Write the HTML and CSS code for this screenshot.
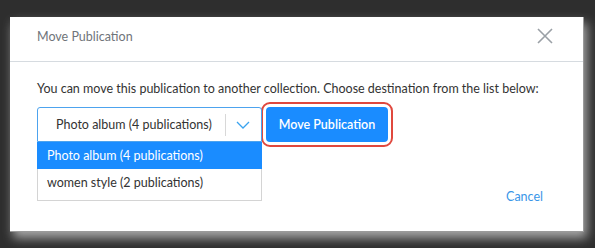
FILE: index.html
```html
<!DOCTYPE html>
<html lang="en">
<head>
    <meta charset="UTF-8">
    <title>Move Publication</title>
    <link rel="stylesheet" href="styles.css">
</head>
<body>
    <div class="modal">
        <div class="modalHeader">
            <span class="title">Move Publication</span>
            <svg class="close" width="16" height="16" viewBox="0 0 16 16">
                <path d="M1 1L15 15M15 1L1 15" stroke="#9aa0a6" stroke-width="1.6" fill="none"/>
            </svg>
        </div>
        <div class="modalBody">
            <p class="info">You can move this publication to another collection. Choose destination from the list below:</p>
            <div class="row">
                <div class="selectWrap">
                    <div class="select">
                        <span class="selected">Photo album (4 publications)</span>
                        <span class="divider"></span>
                        <svg class="chevron" width="14" height="8" viewBox="0 0 14 8">
                            <path d="M1 1L7 7L13 1" stroke="#3aa3ef" stroke-width="1.3" fill="none"/>
                        </svg>
                    </div>
                    <ul class="options">
                        <li class="option active">Photo album (4 publications)</li>
                        <li class="option">women style (2 publications)</li>
                    </ul>
                </div>
                <div class="ring">
                    <button class="btnMove">Move Publication</button>
                </div>
            </div>
            <div class="footer">
                <a class="cancel" href="#">Cancel</a>
            </div>
        </div>
    </div>
</body>
</html>
```

FILE: styles.css
```css
body{
    margin: 0;
    width: 595px;
    height: 248px;
    overflow: hidden;
    background: #2e2e2e;
    font-family: Lato, "Liberation Sans", sans-serif;
}
.modal{
    margin: 17px 0 0 10px;
    width: 573px;
    height: 214px;
    background: #fff;
    border-right: 1px solid #9a9a9a;
    border-bottom: 1px solid #9a9a9a;
    box-shadow: 3px 6px 10px #a8a8a8;
    display: flex;
    flex-direction: column;
}
.modalHeader{
    height: 45px;
    border-bottom: 1px solid #d6dbe0;
    display: flex;
    align-items: center;
    justify-content: space-between;
    padding: 0 30px 6px 27px;
    box-sizing: border-box;
}
.title{
    font-size: 12.5px;
    color: #6f747a;
}
.modalBody{
    padding: 0 27px;
    flex: 1;
    display: flex;
    flex-direction: column;
}
.info{
    margin: 19px 0 0 0;
    font-size: 12.5px;
    color: #333;
    line-height: 16px;
    white-space: nowrap;
}
.row{
    display: flex;
    margin-top: 5px;
    align-items: center;
}
.selectWrap{
    position: relative;
    width: 225px;
}
.select{
    height: 35px;
    border: 1px solid #4da3ee;
    border-radius: 3px 3px 0 0;
    box-sizing: border-box;
    display: flex;
    align-items: center;
    padding-left: 18px;
}
.selected{
    font-size: 12.5px;
    color: #333;
    flex: 1;
    white-space: nowrap;
}
.divider{
    width: 1px;
    height: 22px;
    background: #d8d8d8;
    margin-right: 10px;
}
.chevron{
    margin-right: 11px;
}
.options{
    position: absolute;
    left: 0;
    top: 35px;
    width: 225px;
    margin: 0;
    padding: 0 0 4px 0;
    list-style: none;
    background: #fff;
    border: 1px solid #d4d4d4;
    border-top: none;
    box-sizing: border-box;
}
.option{
    height: 27px;
    line-height: 27px;
    padding-left: 9px;
    font-size: 12.5px;
    color: #333;
    white-space: nowrap;
}
.option.active{
    background: #1a8cff;
    color: #fff;
    margin: 0 -1px;
    padding-left: 10px;
}
.ring{
    margin-left: -1px;
    border: 2px solid #e0483e;
    border-radius: 9px;
    padding: 3px;
}
.btnMove{
    display: block;
    width: 122px;
    height: 35px;
    border: none;
    border-radius: 4px;
    background: #1a8cff;
    color: #fff;
    font-family: Lato, "Liberation Sans", sans-serif;
    font-size: 12.5px;
    font-weight: 600;
}
.footer{
    display: flex;
    justify-content: flex-end;
    margin-top: 42px;
    padding-right: 13px;
}
.cancel{
    font-size: 12.5px;
    color: #3a96e8;
    text-decoration: none;
}
```
